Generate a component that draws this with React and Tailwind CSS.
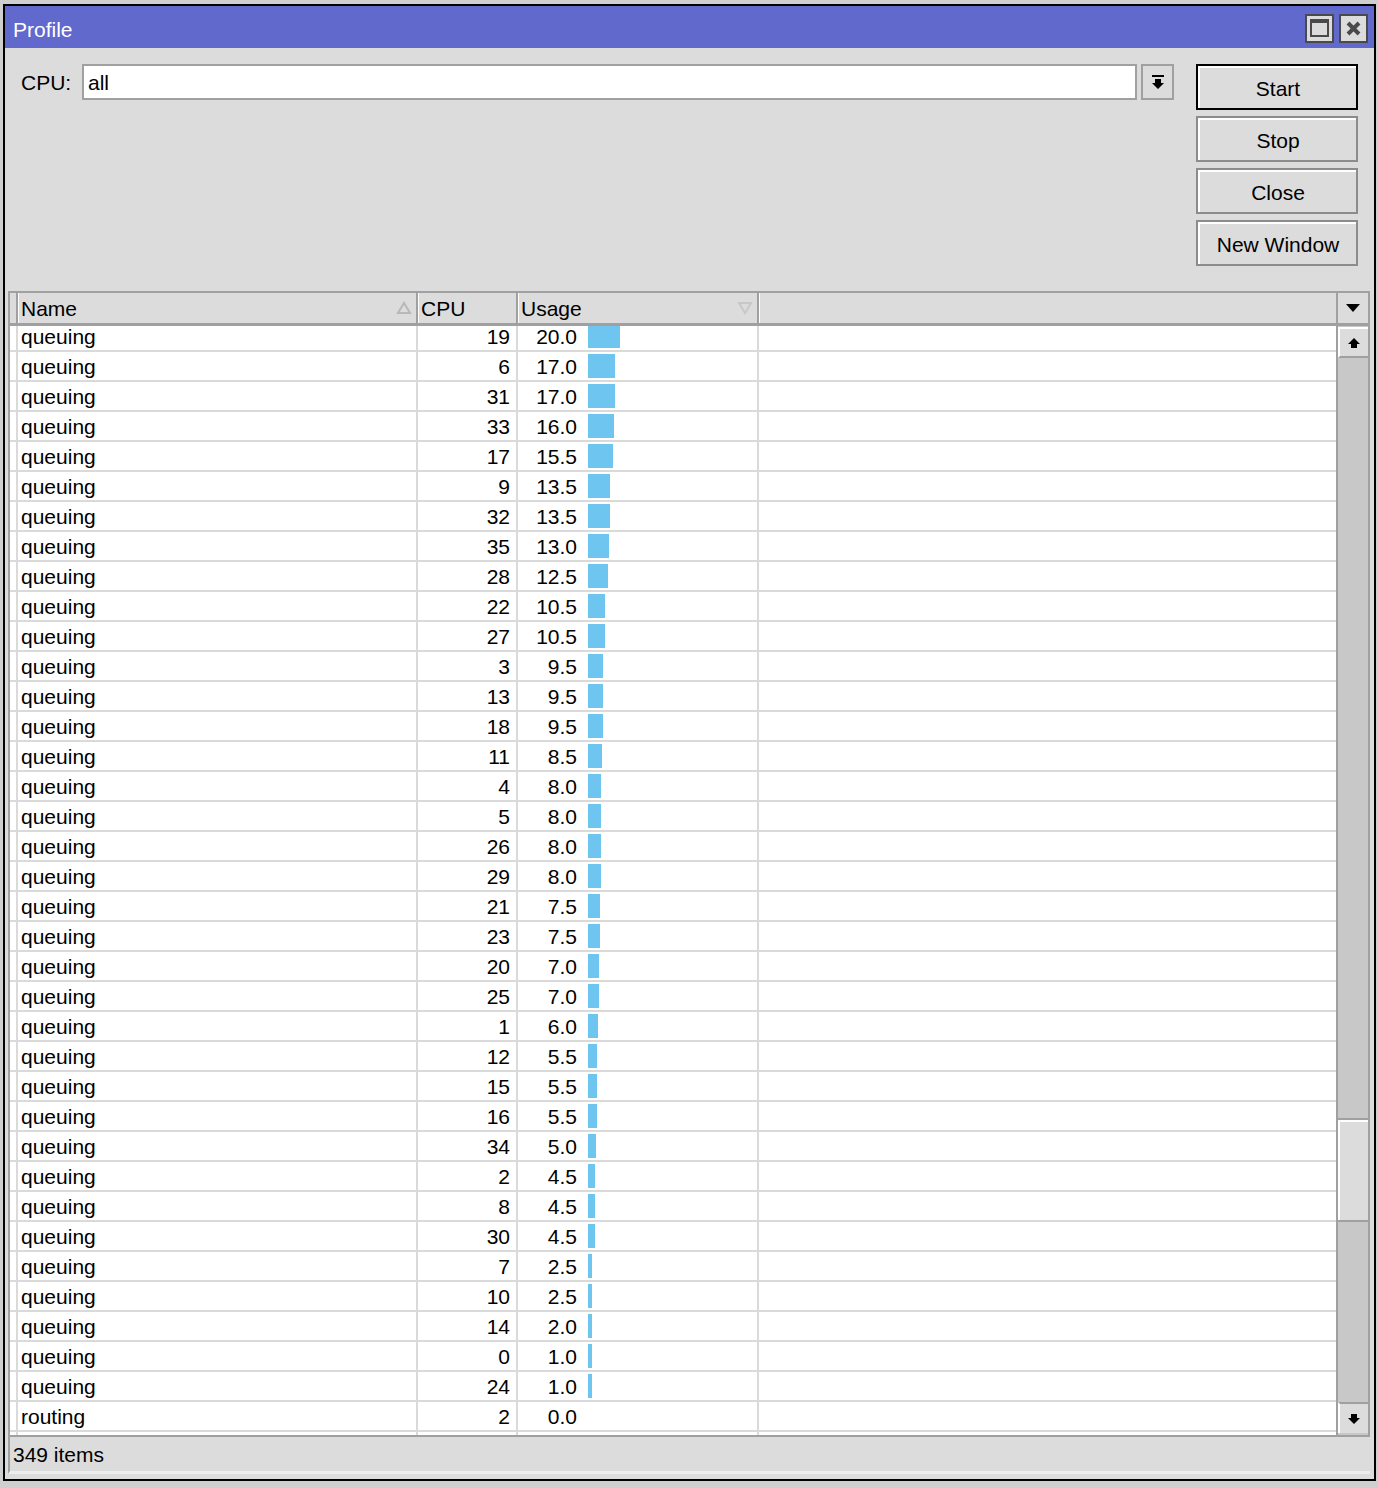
import React from 'react';

const ROWS = [
  ['queuing', 19, '20.0'], ['queuing', 6, '17.0'], ['queuing', 31, '17.0'], ['queuing', 33, '16.0'],
  ['queuing', 17, '15.5'], ['queuing', 9, '13.5'], ['queuing', 32, '13.5'], ['queuing', 35, '13.0'],
  ['queuing', 28, '12.5'], ['queuing', 22, '10.5'], ['queuing', 27, '10.5'], ['queuing', 3, '9.5'],
  ['queuing', 13, '9.5'], ['queuing', 18, '9.5'], ['queuing', 11, '8.5'], ['queuing', 4, '8.0'],
  ['queuing', 5, '8.0'], ['queuing', 26, '8.0'], ['queuing', 29, '8.0'], ['queuing', 21, '7.5'],
  ['queuing', 23, '7.5'], ['queuing', 20, '7.0'], ['queuing', 25, '7.0'], ['queuing', 1, '6.0'],
  ['queuing', 12, '5.5'], ['queuing', 15, '5.5'], ['queuing', 16, '5.5'], ['queuing', 34, '5.0'],
  ['queuing', 2, '4.5'], ['queuing', 8, '4.5'], ['queuing', 30, '4.5'], ['queuing', 7, '2.5'],
  ['queuing', 10, '2.5'], ['queuing', 14, '2.0'], ['queuing', 0, '1.0'], ['queuing', 24, '1.0'],
  ['routing', 2, '0.0'], ['', '', ''],
];

const barWidth = (v) => (v <= 0 ? 0 : Math.max(4, Math.round(v * 1.6)));

const Button = ({ children, primary }) => (
  <div
    className={`h-[46px] flex items-center justify-center border-2 ${
      primary ? 'border-black' : 'border-[#8c8c8c]'
    }`}
  >
    <div className="w-full h-full flex items-center justify-center border-t-2 border-l-2 border-white bg-[#dcdcdc]">
      {children}
    </div>
  </div>
);

const Row = ({ name, cpu, usage }) => {
  const w = usage === '' ? 0 : barWidth(parseFloat(usage));
  return (
    <div className="flex h-[30px] shrink-0 border-b-2 border-[#dadada] bg-white">
      <div className="w-[8px] border-r-2 border-[#dadada]" />
      <div className="w-[400px] border-r-2 border-[#dadada] pl-[3px] flex items-center">{name}</div>
      <div className="w-[100px] border-r-2 border-[#dadada] pr-[6px] flex items-center justify-end">{cpu}</div>
      <div className="w-[241px] border-r-2 border-[#dadada] flex items-center">
        <div className="w-[59px] text-right">{usage}</div>
        {w > 0 && <div className="ml-[11px] h-[24px] bg-[#6ec6f0]" style={{ width: w }} />}
      </div>
      <div className="flex-1" />
    </div>
  );
};

export default function App() {
  return (
    <div className="w-[1378px] h-[1488px] bg-[#cfcfcf] pt-[4px] pl-[3px] font-['Liberation_Sans',Arial,sans-serif] text-[21px] text-black leading-none">
      <div className="w-[1373px] h-[1477px] border-2 border-black bg-[#dcdcdc] flex flex-col">
        {/* Title bar */}
        <div className="h-[42px] shrink-0 bg-[#6169cd] flex items-center pt-[5px] pl-[8px] pr-[6px]">
          <span className="text-white">Profile</span>
          <div className="ml-auto -mt-[3px] flex gap-[5px]">
            <div className="w-[29px] h-[29px] border-2 border-[#4a4a4a] bg-[#dcdcdc] flex items-center justify-center">
              <div className="w-[19px] h-[18px] border-2 border-t-[4px] border-[#4a4a4a]" />
            </div>
            <div className="w-[29px] h-[29px] border-2 border-[#4a4a4a] bg-[#dcdcdc] flex items-center justify-center">
              <svg width="17" height="17" viewBox="0 0 17 17">
                <path d="M3 3 L14 14 M14 3 L3 14" stroke="#4a4a4a" strokeWidth="4" />
              </svg>
            </div>
          </div>
        </div>

        {/* Top area */}
        <div className="h-[243px] shrink-0 flex pt-[16px] pl-[16px] pr-[15px]">
          <div className="w-[61px] h-[36px] flex items-center">CPU:</div>
          <div className="w-[1055px] h-[36px] bg-white border-2 border-[#a0a0a0] flex items-center pl-[4px]">all</div>
          <div className="ml-[4px] w-[33px] h-[36px] border-2 border-[#a0a0a0] flex items-center justify-center">
            <svg width="14" height="18" viewBox="0 0 14 18">
              <rect x="1" y="2" width="12" height="2" fill="#000" />
              <path d="M4 6 H10 V10 H13 L7 16 L1 10 H4 Z" fill="#000" />
            </svg>
          </div>
          <div className="ml-[22px] w-[162px] flex flex-col gap-[6px]">
            <Button primary>Start</Button>
            <Button>Stop</Button>
            <Button>Close</Button>
            <Button>New Window</Button>
          </div>
        </div>

        {/* Table */}
        <div className="ml-[3px] mr-[4px] h-[1146px] shrink-0 flex flex-col border-l-2 border-b-2 border-[#a0a0a0]">
          {/* Header */}
          <div className="h-[35px] shrink-0 flex border-t-2 border-b-[3px] border-[#a0a0a0] bg-[#dcdcdc]">
            <div className="w-[8px] border-r-2 border-[#a0a0a0]" />
            <div className="w-[400px] border-r-2 border-[#a0a0a0] border-l border-l-white pl-[2px] flex items-center">
              <span>Name</span>
              <svg className="ml-auto mr-[4px]" width="16" height="14" viewBox="0 0 16 14">
                <path d="M8 2 L14 12 H2 Z" fill="none" stroke="#b8b8b8" strokeWidth="2" />
              </svg>
            </div>
            <div className="w-[100px] border-r-2 border-[#a0a0a0] border-l border-l-white pl-[2px] flex items-center">CPU</div>
            <div className="w-[241px] border-r-2 border-[#a0a0a0] border-l border-l-white pl-[2px] flex items-center">
              <span>Usage</span>
              <svg className="ml-auto mr-[4px]" width="16" height="14" viewBox="0 0 16 14">
                <path d="M2 2 H14 L8 12 Z" fill="none" stroke="#c8c8c8" strokeWidth="2" />
              </svg>
            </div>
            <div className="flex-1 border-l border-l-white" />
            <div className="w-[34px] border-l-2 border-r-2 border-[#a0a0a0] flex items-center justify-center">
              <svg width="16" height="10" viewBox="0 0 16 10">
                <path d="M1 1 H15 L8 9 Z" fill="#000" />
              </svg>
            </div>
          </div>

          {/* Rows + scrollbar */}
          <div className="flex-1 flex min-h-0">
            <div className="flex-1 overflow-hidden">
              <div className="-mt-[4px] flex flex-col">
                {ROWS.map((r, i) => (
                  <Row key={i} name={r[0]} cpu={r[1]} usage={r[2]} />
                ))}
              </div>
            </div>
            <div className="w-[34px] bg-[#c8c8c8] border-l-2 border-r-2 border-[#a0a0a0] flex flex-col">
              <div className="h-[31px] mt-[1px] bg-[#dcdcdc] border-t-2 border-l-2 border-white border-b-2 border-b-[#a0a0a0] flex items-center justify-center">
                <svg width="14" height="14" viewBox="0 0 14 14">
                  <path d="M7 2 L13 8 H10 V12 H4 V8 H1 Z" fill="#000" />
                </svg>
              </div>
              <div className="h-[760px]" />
              <div className="h-[104px] border-t-2 border-b-2 border-[#a0a0a0] bg-[#dcdcdc]">
                <div className="h-full border-t-2 border-l-2 border-white" />
              </div>
              <div className="flex-1" />
              <div className="h-[31px] mb-[2px] bg-[#dcdcdc] border-t-2 border-l-2 border-white border-t-[#a0a0a0] flex items-center justify-center">
                <svg width="14" height="14" viewBox="0 0 14 14">
                  <path d="M4 2 H10 V6 H13 L7 12 L1 6 H4 Z" fill="#000" />
                </svg>
              </div>
            </div>
          </div>
        </div>

        {/* Status bar */}
        <div className="ml-[3px] mr-[4px] h-[37px] shrink-0 border-l-2 border-[#a0a0a0] border-b-[3px] border-b-[#ececec] flex items-center pl-[3px]">
          349 items
        </div>
      </div>
    </div>
  );
}
